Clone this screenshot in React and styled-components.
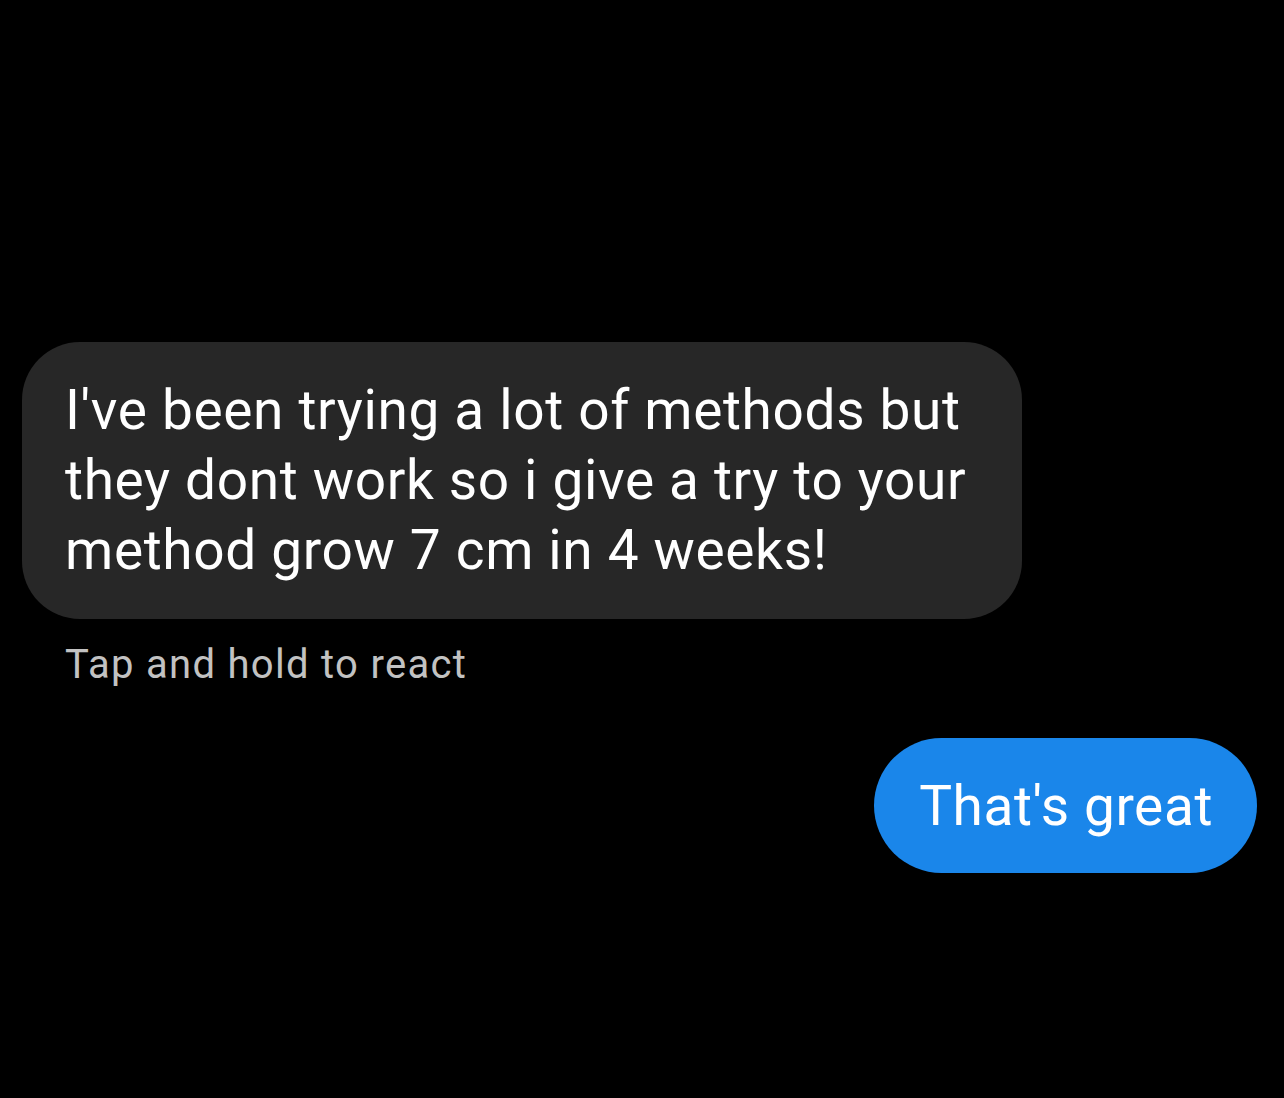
import styled, { createGlobalStyle } from "styled-components"

const Global = createGlobalStyle`
	html, body {
		margin: 0;
		background: #000;
	}
	body {
		font-family: Roboto, "Noto Sans", "Liberation Sans", sans-serif;
	}
`

const Screen = styled.div`
	width: 1284px;
	height: 1098px;
	background: #000;
	display: flex;
	flex-direction: column;
	padding: 342px 27px 0 22px;
	box-sizing: border-box;
`

const Incoming = styled.div`
	align-self: flex-start;
	width: 1000px;
	box-sizing: border-box;
	background: #272727;
	border-radius: 58px;
	padding: 33px 43px 34px;
	color: #fff;
	font-size: 55px;
	line-height: 70px;
	letter-spacing: 0.65px;
`

const Hint = styled.div`
	margin: 19px 0 0 43px;
	color: #c2c2c2;
	font-size: 40px;
	line-height: 54px;
	letter-spacing: 1.3px;
`

const Outgoing = styled.div`
	align-self: flex-end;
	margin-top: 46px;
	height: 135px;
	box-sizing: border-box;
	display: flex;
	align-items: center;
	padding: 0 44px 0 45px;
	background: #1a86ea;
	border-radius: 68px;
	color: #fff;
	font-size: 55px;
	letter-spacing: 0.6px;
`

export default function App() {
	return (
		<>
			<Global />
			<Screen>
				<Incoming>
					I've been trying a lot of methods but<br />
					they dont work so i give a try to your<br />
					method grow 7 cm in 4 weeks!
				</Incoming>
				<Hint>Tap and hold to react</Hint>
				<Outgoing>That's great</Outgoing>
			</Screen>
		</>
	)
}
